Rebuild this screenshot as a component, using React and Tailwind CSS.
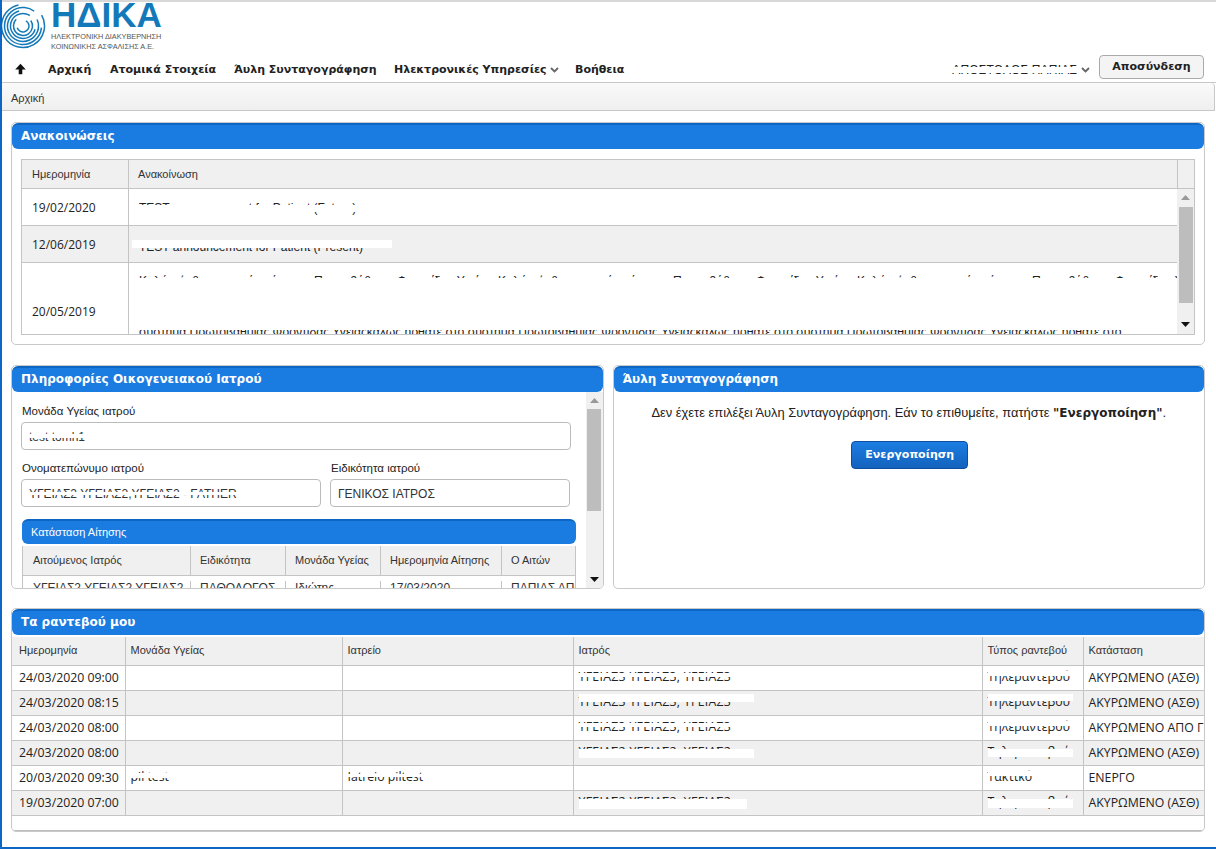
import React from 'react';

const body = "font-['Liberation_Sans',Arial,sans-serif]";
const open = "font-['Open_Sans',sans-serif]";
const wide = "font-['DejaVu_Sans',sans-serif]";

const longLine = 'Καλώς ήρθατε στο νέο σύστημα Πρωτοβάθμιας Φροντίδας Υγείας. Καλώς ήρθατε στο νέο σύστημα Πρωτοβάθμιας Φροντίδας Υγείας. Καλώς ήρθατε στο νέο σύστημα Πρωτοβάθμιας Φροντίδας Υγείας. Καλώς';
const lastLine = 'σύστημα Πρωτοβάθμιας Φροντίδας Υγείαςκαλως ηρθατε στο σύστημα Πρωτοβάθμιας Φροντίδας Υγείαςκαλως ηρθατε στο σύστημα Πρωτοβάθμιας Φροντίδας Υγείαςκαλως ηρθατε στο';

const appointments = [
  { date: '24/03/2020 09:00', unit: '', office: '', doctor: 'ΥΓΕΙΑΣ3 ΥΓΕΙΑΣ3, ΥΓΕΙΑΣ3', type: 'Τηλεραντεβού', status: 'ΑΚΥΡΩΜΕΝΟ (ΑΣΘ)' },
  { date: '24/03/2020 08:15', unit: '', office: '', doctor: 'ΥΓΕΙΑΣ3 ΥΓΕΙΑΣ3, ΥΓΕΙΑΣ3', type: 'Τηλεραντεβού', status: 'ΑΚΥΡΩΜΕΝΟ (ΑΣΘ)', doctorCover: 'left-0 top-[1px] w-[175px] h-[8px]', typeCover: 'left-0 top-[1px] w-[85px] h-[7px]' },
  { date: '24/03/2020 08:00', unit: '', office: '', doctor: 'ΥΓΕΙΑΣ3 ΥΓΕΙΑΣ3, ΥΓΕΙΑΣ3', type: 'Τηλεραντεβού', status: 'ΑΚΥΡΩΜΕΝΟ ΑΠΟ ΓΙΑΤΡΟ' },
  { date: '24/03/2020 08:00', unit: '', office: '', doctor: 'ΥΓΕΙΑΣ2 ΥΓΕΙΑΣ2, ΥΓΕΙΑΣ2', type: 'Τηλεραντεβού', status: 'ΑΚΥΡΩΜΕΝΟ (ΑΣΘ)', doctorCover: 'left-0 top-[6px] w-[175px] h-[9px]', typeCover: 'left-0 top-[6px] w-[85px] h-[8px]' },
  { date: '20/03/2020 09:30', unit: 'pil test', office: 'Iatreio piltest', doctor: '', type: 'Τακτικό', status: 'ΕΝΕΡΓΟ' },
  { date: '19/03/2020 07:00', unit: '', office: '', doctor: 'ΥΓΕΙΑΣ2 ΥΓΕΙΑΣ2, ΥΓΕΙΑΣ2', type: 'Τηλεραντεβού', status: 'ΑΚΥΡΩΜΕΝΟ (ΑΣΘ)', doctorCover: 'left-0 top-[6px] w-[168px] h-[10px]', typeCover: 'left-0 top-[6px] w-[85px] h-[9px]' },
];

// rings of the logo: radius, how much of the ring is drawn, where it starts
const rings = [
  [21.5, 80, -30],
  [18.5, 84, 5],
  [15.5, 78, -25],
  [12.5, 80, 15],
  [9.5, 72, -35],
  [6, 62, -60],
];

// text that has been wiped out in the screenshot, a white strip lies over part of it
const Wiped = ({ children, cover = 'left-0 right-0 top-[5px] h-[4px]', className = '' }) => (
  <span className={`relative inline-block whitespace-nowrap ${className}`}>
    {children}
    <span className={`absolute bg-white ${cover}`}></span>
  </span>
);

const Logo = () => (
  <div className="flex h-[50px] items-start">
    <svg width="46" height="50" viewBox="0 0 46 50" fill="none" stroke="#1479b8" className="shrink-0">
      {rings.map(([r, drawn, start]) => (
        <circle
          key={r}
          cx="21"
          cy="24"
          r={r}
          strokeWidth="1.5"
          pathLength="100"
          strokeDasharray={`${drawn} ${100 - drawn}`}
          transform={`rotate(${start} 21 24)`}
        />
      ))}
    </svg>
    <div className="ml-[3px] flex flex-col">
      <span className={`${body} h-[26px] text-[35px] leading-[26px] font-bold text-[#1479b8]`}>ΗΔΙΚΑ</span>
      <span className={`${body} mt-[4px] text-[7.3px] leading-[10px] text-[#555]`}>ΗΛΕΚΤΡΟΝΙΚΗ ΔΙΑΚΥΒΕΡΝΗΣΗ<br />ΚΟΙΝΩΝΙΚΗΣ ΑΣΦΑΛΙΣΗΣ Α.Ε.</span>
    </div>
  </div>
);

const Chevron = () => (
  <svg width="9" height="6" viewBox="0 0 9 6" fill="none" stroke="#666" strokeWidth="1.8"><path d="M1 1l3.5 3.5L8 1" /></svg>
);

const Nav = () => (
  <div className={`${wide} flex h-[31px] items-center border-b border-[#c8c8c8] pt-[6px] text-[11px] font-bold text-[#222]`}>
    <svg width="11" height="12" viewBox="0 0 11 11" className="mb-[2px] ml-[13px] mr-[22px] shrink-0" fill="#111">
      <path d="M5.5 0.3L10.8 5.9H7.3V10.8H3.7V5.9H0.2Z" />
    </svg>
    <span className="w-[62px]">Αρχική</span>
    <span className="w-[124px]">Ατομικά Στοιχεία</span>
    <span className="w-[160px]">Άυλη Συνταγογράφηση</span>
    <span className="flex w-[181px] items-center gap-[3px]">Ηλεκτρονικές Υπηρεσίες <Chevron /></span>
    <span>Βοήθεια</span>
    <span className={`${body} ml-auto text-[12px] font-normal tracking-[0.2px]`}>
      <Wiped cover="left-0 right-0 top-[6px] h-[6px]">ΑΠΟΣΤΟΛΟΣ ΠΑΠΙΑΣ</Wiped>
    </span>
    <span className="ml-[4px] mr-[9px]"><Chevron /></span>
    <button className="mb-[6px] mr-[12px] h-[24px] w-[105px] rounded-[4px] border border-[#aaa] bg-[#f4f4f4] text-[11px] font-bold text-[#222]">Αποσύνδεση</button>
  </div>
);

const Panel = ({ title, className = '', children }) => (
  <section className={`overflow-hidden rounded-[5px] border border-[#c9c9c9] bg-white ${className}`}>
    <h2 className={`${wide} flex h-[26px] items-center rounded-[6px] border-t-2 border-[#0d66c4] bg-[#1a7be0] pb-[2px] pl-[9px] text-[12px] font-bold text-white`}>{title}</h2>
    {children}
  </section>
);

const Arrow = ({ up }) => (
  <svg width="9" height="5" viewBox="0 0 9 5" fill={up ? '#999' : '#111'}>
    <path d={up ? 'M4.5 0L9 5H0Z' : 'M0 0H9L4.5 5Z'} />
  </svg>
);

const Scrollbar = ({ thumbTop, thumbHeight, bottomPad = 'pb-[7px]' }) => (
  <div className={`flex h-full w-[17px] shrink-0 flex-col items-center bg-[#f0f0f0] ${bottomPad}`}>
    <div className="flex h-[17px] shrink-0 items-center justify-center"><Arrow up /></div>
    <div className={`${thumbTop} ${thumbHeight} w-[14px] shrink-0 bg-[#bdbdbd]`}></div>
    <div className="mt-auto"><Arrow /></div>
  </div>
);

const Announcements = () => (
  <Panel title="Ανακοινώσεις" className="h-[223px]">
    <div className="mx-[9px] mt-[10px] h-[176px] border border-[#c4c4c4] bg-white">
      <div className={`${body} flex h-[29px] items-center border-b border-[#c4c4c4] bg-[#f0f0f0] text-[11px] text-[#333]`}>
        <div className="flex h-full w-[107px] items-center border-r border-[#c4c4c4] pl-[10px]">Ημερομηνία</div>
        <div className="flex h-full flex-1 items-center pl-[9px]">Ανακοίνωση</div>
        <div className="h-full w-[17px] border-l border-[#c4c4c4]"></div>
      </div>
      <div className="flex h-[145px]">
        <div className={`${open} min-w-0 flex-1 overflow-hidden text-[12px] text-[#222]`}>
          <div className="flex h-[37px] border-b border-[#c4c4c4]">
            <div className="flex w-[107px] shrink-0 items-center border-r border-[#c4c4c4] pl-[10px] pt-[2px]">19/02/2020</div>
            <div className={`${body} flex-1 pl-[10px] pt-[10px] text-[12px]`}>
              <Wiped cover="left-0 right-0 top-[6px] h-[7px]">TEST announcement for Patient (Future)</Wiped>
            </div>
          </div>
          <div className="flex h-[37px] border-b border-[#c4c4c4] bg-[#f0f0f0]">
            <div className="flex w-[107px] shrink-0 items-center border-r border-[#c4c4c4] pl-[10px] pt-[2px]">12/06/2019</div>
            <div className={`${body} relative flex-1 pl-[10px] pt-[12px] text-[12px]`}>
              TEST announcement for Patient (Present)
              <span className="absolute left-[3px] top-[14px] h-[8px] w-[260px] bg-white"></span>
            </div>
          </div>
          <div className="flex h-[96px]">
            <div className="flex w-[107px] shrink-0 items-center border-r border-[#c4c4c4] pl-[10px] pt-[2px]">20/05/2019</div>
            <div className={`${body} min-w-0 flex-1 overflow-hidden pl-[10px] pt-[9px] text-[12.15px] whitespace-nowrap`}>
              <Wiped cover="left-0 right-0 top-[6px] h-[12px]">{longLine}</Wiped>
              <div className="mt-[33px]">
                <Wiped cover="left-0 right-0 top-0 h-[7px]">{lastLine}</Wiped>
              </div>
            </div>
          </div>
        </div>
        <Scrollbar thumbTop="mt-[1px]" thumbHeight="h-[96px]" />
      </div>
    </div>
  </Panel>
);

const Field = ({ label, className = '', children }) => (
  <div className={className}>
    <div className={`${body} pl-[1px] text-[11.5px] leading-[14px] text-[#222]`}>{label}</div>
    <div className={`${body} mt-[4px] flex h-[28px] items-center rounded-[4px] border border-[#bbb] pl-[7px] pt-[1px] text-[12px] text-[#333]`}>{children}</div>
  </div>
);

const DoctorInfo = () => (
  <Panel title="Πληροφορίες Οικογενειακού Ιατρού" className="h-[224px] w-[593px]">
    <div className="flex h-[196px]">
      <div className="min-w-0 flex-1 overflow-hidden">
        <div className="flex flex-col pl-[9px] pr-[5px] pt-[12px]">
          <Field label="Μονάδα Υγείας ιατρού" className="w-[550px]">
            <Wiped cover="left-0 right-0 top-[6px] h-[4px]">test tomh1</Wiped>
          </Field>
          <div className="mt-[11px] flex w-[550px] gap-[9px]">
            <Field label="Ονοματεπώνυμο ιατρού" className="w-[300px]">
              <Wiped cover="left-0 right-0 top-[7px] h-[3px]">ΥΓΕΙΑΣ2 ΥΓΕΙΑΣ2,ΥΓΕΙΑΣ2 - FATHER</Wiped>
            </Field>
            <Field label="Ειδικότητα ιατρού" className="w-[240px]">ΓΕΝΙΚΟΣ ΙΑΤΡΟΣ</Field>
          </div>
          <div className="ml-[1px] mt-[12px] w-[554px] overflow-hidden">
            <div className={`${body} flex h-[25px] items-center rounded-[6px] border-t-2 border-[#0d66c4] bg-[#1a7be0] pl-[9px] text-[11px] text-white`}>Κατάσταση Αίτησης</div>
            <div className={`${body} mt-[2px] flex h-[30px] items-center border-x border-b border-[#c4c4c4] bg-[#f0f0f0] text-[11px] text-[#333]`}>
              <div className="flex h-full w-[168px] items-center border-r border-[#c4c4c4] pl-[10px]">Αιτούμενος Ιατρός</div>
              <div className="flex h-full w-[95px] items-center border-r border-[#c4c4c4] pl-[9px]">Ειδικότητα</div>
              <div className="flex h-full w-[95px] items-center border-r border-[#c4c4c4] pl-[9px]">Μονάδα Υγείας</div>
              <div className="flex h-full w-[121px] items-center border-r border-[#c4c4c4] pl-[9px]">Ημερομηνία Αίτησης</div>
              <div className="flex h-full flex-1 items-center pl-[9px]">Ο Αιτών</div>
            </div>
            <div className={`${body} flex border-x border-[#c4c4c4] pt-[5px] text-[12px] leading-[14px] text-[#333]`}>
              <div className="w-[168px] border-r border-[#c4c4c4] pl-[10px] whitespace-nowrap">ΥΓΕΙΑΣ2 ΥΓΕΙΑΣ2 ΥΓΕΙΑΣ2</div>
              <div className="w-[95px] border-r border-[#c4c4c4] pl-[9px]">ΠΑΘΟΛΟΓΟΣ</div>
              <div className="w-[95px] border-r border-[#c4c4c4] pl-[9px]">Ιδιώτης</div>
              <div className="w-[121px] border-r border-[#c4c4c4] pl-[9px]">17/03/2020</div>
              <div className="flex-1 overflow-hidden pl-[9px] whitespace-nowrap">ΠΑΠΙΑΣ ΑΠΟΣΤΟΛΟΣ</div>
            </div>
          </div>
        </div>
      </div>
      <Scrollbar thumbTop="mt-0" thumbHeight="h-[102px]" bottomPad="pb-[6px]" />
    </div>
  </Panel>
);

const Prescribing = () => (
  <Panel title="Άυλη Συνταγογράφηση" className="h-[224px] w-[593px]">
    <p className={`${body} mt-[13px] text-center text-[12.9px] leading-[15px] text-[#222]`}>
      Δεν έχετε επιλέξει Άυλη Συνταγογράφηση. Εάν το επιθυμείτε, πατήστε <b className={`${wide} text-[12px]`}>"Ενεργοποίηση"</b>.
    </p>
    <div className="mt-[20px] flex justify-center pl-[2px]">
      <button className={`${wide} h-[28px] w-[117px] rounded-[4px] border border-[#0d4f9e] bg-gradient-to-b from-[#1c7de2] to-[#1362bd] text-[11px] font-bold text-white`}>Ενεργοποίηση</button>
    </div>
  </Panel>
);

const Appointments = () => (
  <Panel title="Τα ραντεβού μου" className="h-[224px]">
    <div className="mt-[2px] h-[195px] w-[1192px] overflow-hidden border-b-2 border-[#bdbdbd]">
      <table className="w-[1221px] table-fixed border-collapse">
        <colgroup>
          <col className="w-[113px]" />
          <col className="w-[217px]" />
          <col className="w-[231px]" />
          <col className="w-[409px]" />
          <col className="w-[101px]" />
          <col className="w-[150px]" />
        </colgroup>
        <thead>
          <tr className={`${body} h-[28px] border-b border-[#c4c4c4] bg-[#f0f0f0] text-left text-[11px] text-[#333]`}>
            <th className="border-r border-[#c4c4c4] pb-[2px] pl-[7px] font-normal">Ημερομηνία</th>
            <th className="border-r border-[#c4c4c4] pb-[2px] pl-[5px] font-normal">Μονάδα Υγείας</th>
            <th className="border-r border-[#c4c4c4] pb-[2px] pl-[5px] font-normal">Ιατρείο</th>
            <th className="border-r border-[#c4c4c4] pb-[2px] pl-[5px] font-normal">Ιατρός</th>
            <th className="border-r border-[#c4c4c4] pb-[2px] pl-[5px] font-normal">Τύπος ραντεβού</th>
            <th className="pb-[2px] pl-[5px] font-normal">Κατάσταση</th>
          </tr>
        </thead>
        <tbody className={`${open} text-[12.3px] text-[#222]`}>
          {appointments.map((row, i) => (
            <tr key={i} className={`h-[25px] border-b border-[#c4c4c4] ${i % 2 ? 'bg-[#f0f0f0]' : 'bg-white'}`}>
              <td className="border-r border-[#c4c4c4] pl-[7px] pt-[1px] whitespace-nowrap">{row.date}</td>
              <td className="border-r border-[#c4c4c4] pl-[5px]">
                {row.unit && <Wiped cover="left-0 right-0 top-[5px] h-[5px]">{row.unit}</Wiped>}
              </td>
              <td className="border-r border-[#c4c4c4] pl-[5px]">
                {row.office && <Wiped cover="left-0 right-0 top-[6px] h-[3px]">{row.office}</Wiped>}
              </td>
              <td className="border-r border-[#c4c4c4] pl-[5px]">
                {row.doctor && <Wiped className="tracking-[0.3px]" cover={row.doctorCover || 'left-0 right-0 top-[5px] h-[4px]'}>{row.doctor}</Wiped>}
              </td>
              <td className="border-r border-[#c4c4c4] pl-[5px]">
                <Wiped cover={row.typeCover || 'left-0 right-0 top-[3px] h-[5px]'}>{row.type}</Wiped>
              </td>
              <td className="overflow-hidden pl-[5px] pt-[1px] whitespace-nowrap">{row.status}</td>
            </tr>
          ))}
        </tbody>
      </table>
    </div>
  </Panel>
);

export default function App() {
  return (
    <div className="h-[849px] w-[1216px] overflow-hidden border-b-2 border-l-2 border-b-[#0d66c4] border-l-[#0d66c4] bg-white">
      <div className="border-t-2 border-[#d8d8d8]">
        <Logo />
        <Nav />
      </div>
      <div className={`${body} mr-[1px] flex h-[28px] items-center rounded-tr-[4px] border-b border-r border-[#c8c8c8] bg-gradient-to-b from-[#fafafa] to-[#efefef] pl-[9px] pt-[3px] text-[11px] text-[#333]`}>Αρχική</div>
      <main className="w-[1203px] pl-[9px] pt-[11px]">
        <Announcements />
        <div className="mt-[20px] flex gap-[9px]">
          <DoctorInfo />
          <Prescribing />
        </div>
        <div className="mt-[19px]">
          <Appointments />
        </div>
      </main>
    </div>
  );
}
